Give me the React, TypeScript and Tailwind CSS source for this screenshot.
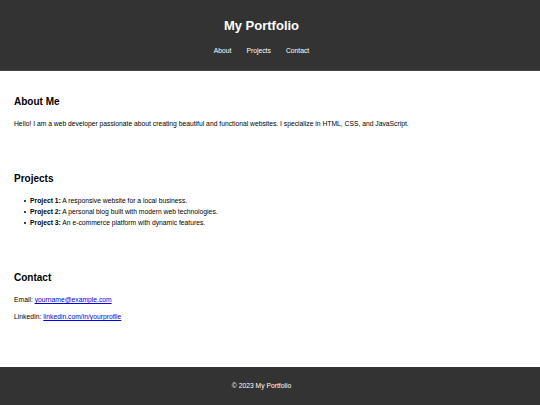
const projects = [
  { name: 'Project 1:', text: 'A responsive website for a local business.' },
  { name: 'Project 2:', text: 'A personal blog built with modern web technologies.' },
  { name: 'Project 3:', text: 'An e-commerce platform with dynamic features.' },
]

export default function App() {
  return (
    <div className="min-h-[405px] flex flex-col bg-white text-black font-['Liberation_Sans',Arial,sans-serif]">
      <header className="h-[71px] bg-[#333] border-b border-[#444] text-white text-center flex flex-col items-center pr-[17px]">
        <h1 className="mt-[18px] text-[13px] leading-[15px] font-bold">My Portfolio</h1>
        <nav className="mt-[14px] flex gap-[15px] text-[6.75px] leading-[8px]">
          <a href="#about">About</a>
          <a href="#projects">Projects</a>
          <a href="#contact">Contact</a>
        </nav>
      </header>

      <main className="flex-1 px-[14px] text-[6.75px] leading-[8px]">
        <section id="about" className="pt-[25px]">
          <h2 className="text-[10px] leading-[12px] font-bold">About Me</h2>
          <p className="mt-[12px]">
            Hello! I am a web developer passionate about creating beautiful and functional websites. I specialize in HTML, CSS, and JavaScript.
          </p>
        </section>

        <section id="projects" className="pt-[45px]">
          <h2 className="text-[10px] leading-[12px] font-bold">Projects</h2>
          <ul className="mt-[10px] pl-[10px] leading-[11px]">
            {projects.map((p) => (
              <li key={p.name} className="flex items-center gap-[4px]">
                <span className="w-[2px] h-[2px] rounded-full bg-black shrink-0" />
                <span>
                  <strong>{p.name}</strong> {p.text}
                </span>
              </li>
            ))}
          </ul>
        </section>

        <section id="contact" className="pt-[44px]">
          <h2 className="text-[10px] leading-[12px] font-bold">Contact</h2>
          <p className="mt-[12px]">
            Email: <a href="#" className="text-[#00e] underline">yourname@example.com</a>
          </p>
          <p className="mt-[9px]">
            LinkedIn: <a href="#" className="text-[#00e] underline">linkedin.com/in/yourprofile</a>
          </p>
        </section>
      </main>

      <footer className="h-[38px] bg-[#333] text-white text-center flex items-center justify-center text-[6.75px] pr-[17px]">
        <p>© 2023 My Portfolio</p>
      </footer>
    </div>
  )
}
